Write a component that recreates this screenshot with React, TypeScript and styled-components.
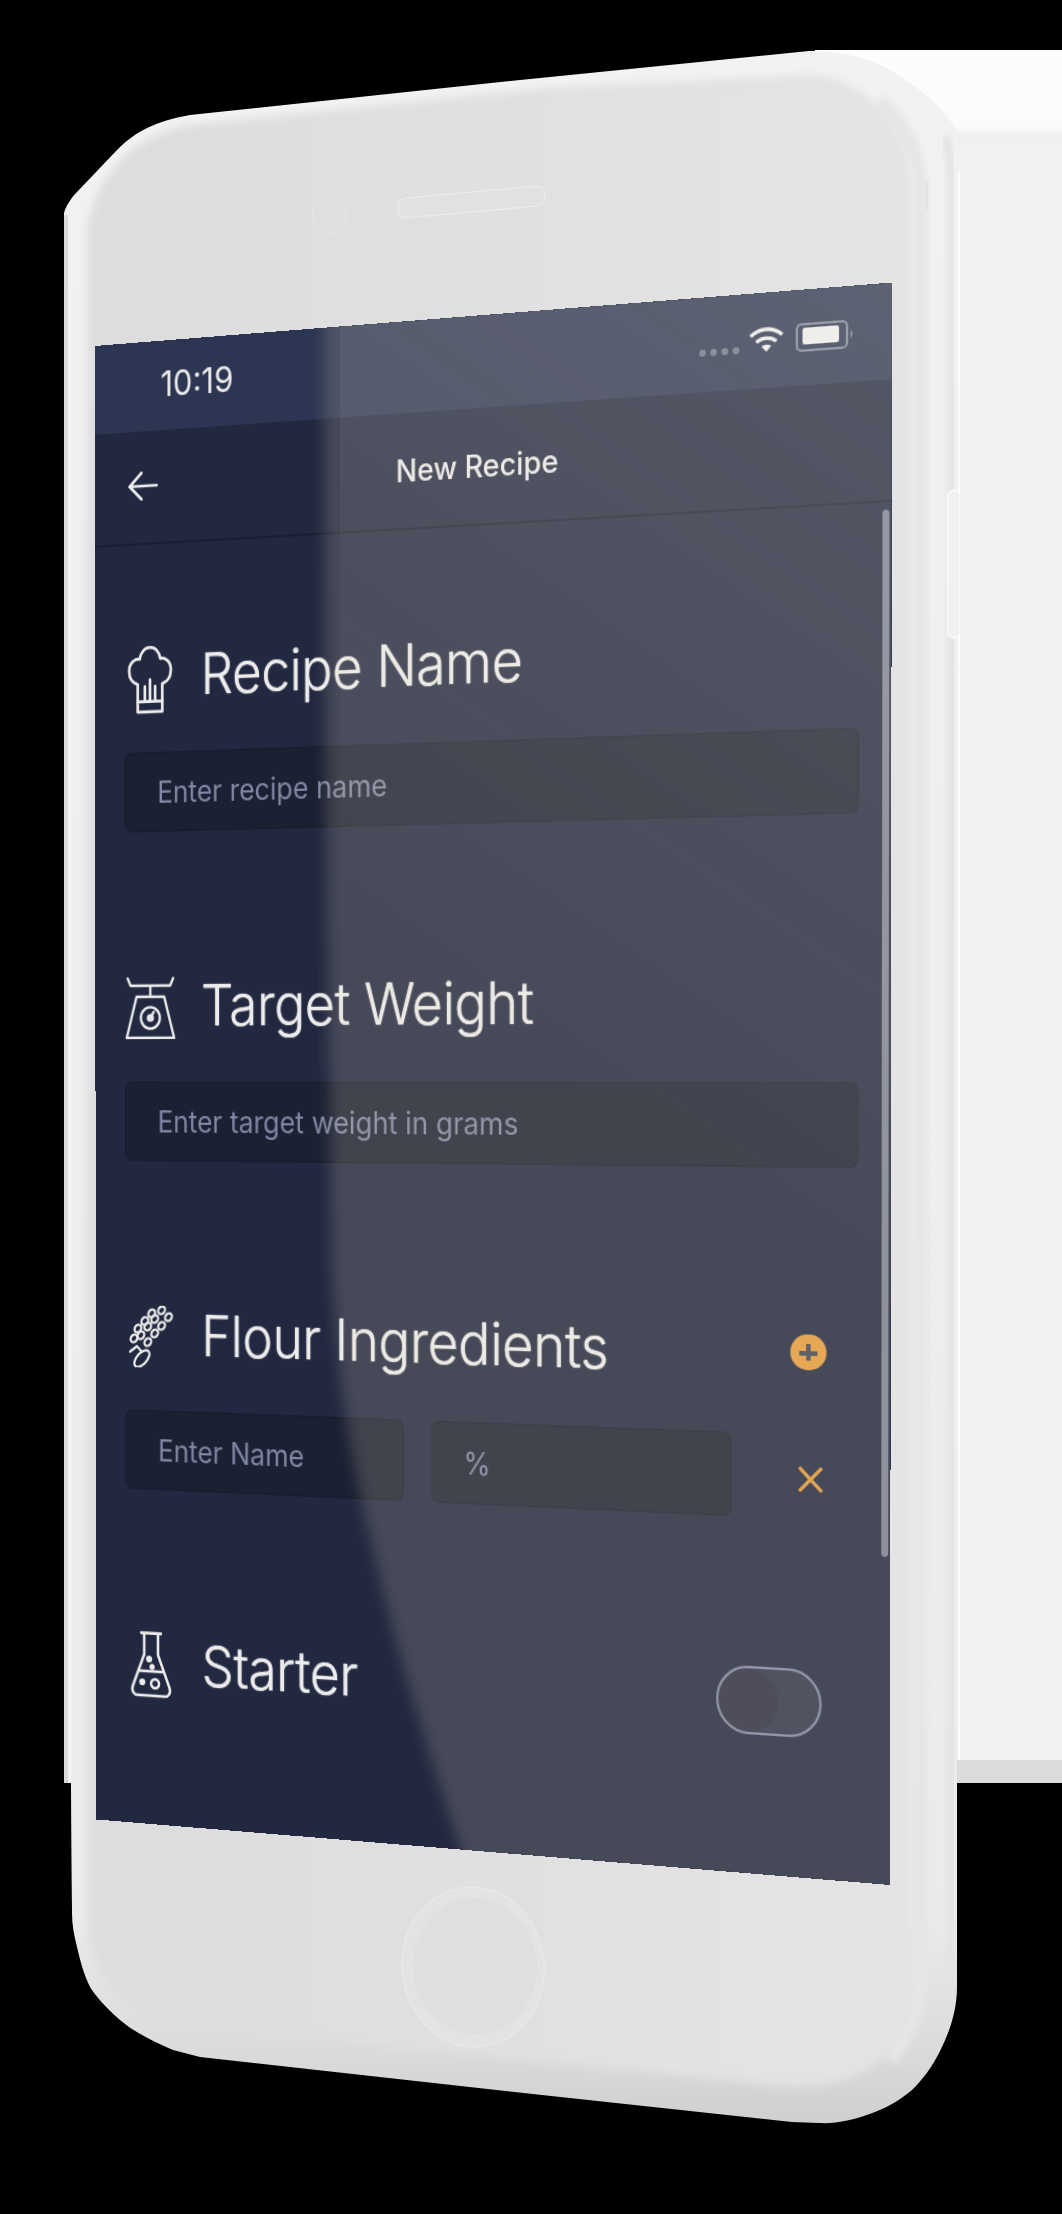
import React from 'react';
import styled, { createGlobalStyle } from 'styled-components';

const SCREEN_W = 375;
const SCREEN_H = 667;

// where the flat screen lands on the picture: TL, TR, BR, BL
type Pt = [number, number];
const corners: Pt[] = [
	[94.5, 346],
	[892, 282.5],
	[890, 1885],
	[96.5, 1819.5],
];

const quadMatrix = (w: number, h: number, [p0, p1, p2, p3]: Pt[]) => {
	const dx1 = p1[0] - p2[0];
	const dx2 = p3[0] - p2[0];
	const sx = p0[0] - p1[0] + p2[0] - p3[0];
	const dy1 = p1[1] - p2[1];
	const dy2 = p3[1] - p2[1];
	const sy = p0[1] - p1[1] + p2[1] - p3[1];
	const den = dx1 * dy2 - dx2 * dy1;
	const g = (sx * dy2 - dx2 * sy) / den;
	const k = (dx1 * sy - sx * dy1) / den;
	const a = p1[0] - p0[0] + g * p1[0];
	const b = p3[0] - p0[0] + k * p3[0];
	const d = p1[1] - p0[1] + g * p1[1];
	const e = p3[1] - p0[1] + k * p3[1];
	return `matrix3d(${a / w},${d / w},0,${g / w},${b / h},${e / h},0,${k / h},0,0,1,0,${p0[0]},${p0[1]},0,1)`;
};

const GlobalStyle = createGlobalStyle`
	html, body {
		margin: 0;
		background: #000;
	}
`;

const Stage = styled.div`
	position: relative;
	width: 1062px;
	height: 2214px;
	overflow: hidden;
	background: #000;
`;

const BackPanel = styled.div`
	position: absolute;
	left: 815px;
	right: 0;
	top: 50px;
	height: 1733px;
	background: linear-gradient(
		to bottom,
		#fdfdfd 0,
		#fbfbfb 76px,
		#eeeeee 86px,
		#f2f2f2 100px,
		#f2f2f2 1710px,
		#dcdcdc 1710px
	);
`;

const DeviceArt = styled.svg`
	position: absolute;
	left: 0;
	top: 0;
`;

const Sheen = styled.svg`
	position: absolute;
	left: 0;
	top: 0;
	pointer-events: none;
`;

const Screen = styled.div`
	position: absolute;
	left: 0;
	top: 0;
	width: ${SCREEN_W}px;
	height: ${SCREEN_H}px;
	transform-origin: 0 0;
	transform: ${quadMatrix(SCREEN_W, SCREEN_H, corners)};
	background: #222840;
	overflow: hidden;
	color: #ececec;
	font-family: Inter, 'Liberation Sans', sans-serif;
`;

const StatusBar = styled.div`
	display: flex;
	align-items: center;
	height: 39.5px;
	padding: 0 17.5px 0 33.5px;
	box-sizing: border-box;
	background: #2c3552;
`;

const Clock = styled.span`
	font-size: 15.5px;
	margin-right: auto;
`;

const SignalDots = styled.div`
	display: flex;
	gap: 1.7px;
	margin: 7px 4.5px 0 0;
`;

const SignalDot = styled.i`
	width: 3px;
	height: 3px;
	border-radius: 50%;
	background: #6f7588;
`;

const Battery = styled.div`
	position: relative;
	display: flex;
	box-sizing: border-box;
	width: 23px;
	height: 12px;
	margin: 0 1.5px 0 5px;
	padding: 1.5px;
	border: 1px solid #7d8498;
	border-radius: 2.5px;

	&::after {
		content: '';
		position: absolute;
		right: -2.8px;
		top: 3px;
		border-left: 1.8px solid #7d8498;
		border-top: 2px solid transparent;
		border-bottom: 2px solid transparent;
	}
`;

const BatteryFill = styled.div`
	width: 16px;
	background: #f0f0f0;
	border-radius: 1px;
`;

const NavBar = styled.div`
	display: grid;
	grid-template-columns: 1fr auto 1fr;
	align-items: center;
	height: 51.5px;
	padding-left: 17px;
	padding-right: 17px;
	box-sizing: border-box;
	border-bottom: 1px solid rgba(0, 0, 0, 0.25);
`;

const BackArrow = styled.svg`
	display: block;
`;

const NavTitle = styled.span`
	font-size: 13.5px;
	font-weight: 500;
`;

const Content = styled.div`
	display: flex;
	flex-direction: column;
	gap: 63px;
	padding: 44px 14px 0 15px;
`;

const Section = styled.section`
	display: flex;
	flex-direction: column;
	gap: 17px;
`;

const HeadingRow = styled.div`
	display: flex;
	align-items: center;
	height: 32px;
	padding-right: 14.4px;
`;

const IconSlot = styled.div`
	display: flex;
	flex: none;
	align-items: center;
	justify-content: center;
	width: 26px;
	margin-right: 12.5px;
`;

const Heading = styled.h2`
	margin: 0 auto 0 0;
	padding-bottom: 2px;
	font-size: 25.4px;
	font-weight: 300;
	line-height: 30px;
	letter-spacing: -0.2px;
	text-shadow: 0 0 0.6px currentColor;
`;

const Field = styled.div<{ $inset?: number }>`
	display: flex;
	align-items: center;
	box-sizing: border-box;
	height: 36px;
	padding-left: ${p => p.$inset ?? 15.6}px;
	background: rgba(0, 0, 0, 0.2);
	border: 1px solid rgba(0, 0, 0, 0.08);
	border-radius: 4px;
	font-size: 13.2px;
	color: #7f87a3;
`;

const IngredientRow = styled.div`
	display: grid;
	grid-template-columns: 137.6px 138.5px 1fr;
	gap: 13.8px;
	align-items: center;
`;

const RemoveCell = styled.div`
	display: flex;
	justify-content: center;
	padding-top: 2px;
`;

const AddButton = styled.div`
	position: relative;
	width: 15.2px;
	height: 15.2px;
	margin-bottom: 3px;
	border-radius: 50%;
	background: #e69b3d;

	&::before,
	&::after {
		content: '';
		position: absolute;
		background: #404555;
	}
	&::before {
		left: 3.8px;
		right: 3.8px;
		top: 6.6px;
		height: 2px;
	}
	&::after {
		top: 3.8px;
		bottom: 3.8px;
		left: 6.6px;
		width: 2px;
	}
`;

const Toggle = styled.div`
	box-sizing: border-box;
	width: 47px;
	height: 29px;
	margin: 0 1.5px 3px 0;
	border: 1px solid #7f89a3;
	border-radius: 14.5px;
	background: rgba(255, 255, 255, 0.06);
	overflow: hidden;
`;

const ToggleThumb = styled.div`
	width: 27px;
	height: 27px;
	border-radius: 50%;
	background: rgba(0, 0, 0, 0.1);
`;

const Scrollbar = styled.div`
	position: absolute;
	left: 370.5px;
	top: 94px;
	width: 3px;
	height: 436px;
	border-radius: 2px;
	background: #7b8095;
`;

const lineProps = {
	fill: 'none',
	stroke: '#ececec',
	strokeWidth: 1.3,
	strokeLinejoin: 'round' as const,
	strokeLinecap: 'round' as const,
};

const ChefHat = () => (
	<svg width="24" height="31" viewBox="0 0 22 30" {...lineProps}>
		<path d="M5 17C2 16 .8 13.500 .8 11 .8 7.500 3.500 5.500 6 6 6.500 3 8.500 1 11 1s4.500 2 5 5c2.500-.5 5.200 1.500 5.200 5 0 2.500-1.200 5-4.200 6v12H5z" />
		<path d="M5 24.500h12M8.500 18v6.500M11 15v9.500M13.500 18v6.500" />
	</svg>
);

const Scale = () => (
	<svg width="27" height="28" viewBox="0 0 26 28" {...lineProps} strokeWidth="1.200">
		<path d="M1.500 .7 3 4h20L24.500 .7M13 4v5M6 9h14l5 18.500H1z" />
		<circle cx="13" cy="18.500" r="4.800" />
		<path d="M13 18.500l1.800-2.800" />
		<circle cx="13" cy="18.500" r="1.200" />
	</svg>
);

const grain: Pt[] = [
	[12, 3.5],
	[8.5, 7],
	[5, 10.5],
	[3, 15],
	[17, 2],
	[13.5, 6],
	[10, 9.5],
	[6.5, 13.5],
	[20.5, 5],
	[17, 9],
	[13.5, 12.5],
	[10, 16.5],
];

const Wheat = () => (
	<svg width="24" height="28" viewBox="0 0 23 28" {...lineProps} strokeWidth="1.100">
		{grain.map(([cx, cy]) => (
			<ellipse
				key={`${cx}-${cy}`}
				cx={cx}
				cy={cy}
				rx="1.900"
				ry="1.500"
				transform={`rotate(-40 ${cx} ${cy})`}
			/>
		))}
		<path d="M1 21 4.500 18.500 7 21" />
		<ellipse cx="7" cy="24" rx="4.800" ry="2.500" transform="rotate(-45 7 24)" />
	</svg>
);

const Flask = () => (
	<svg width="22" height="30" viewBox="0 0 21 30" {...lineProps}>
		<path d="M5.500 .8h10M7 .8v9.700L1.200 25c-.8 2.500.6 4 2.300 4h14c1.700 0 3.100-1.500 2.300-4L14 10.500V.8M4.800 18h11.400" />
		<circle cx="9.500" cy="12.500" r=".9" fill="#ececec" />
		<circle cx="11" cy="16" r=".7" fill="#ececec" />
		<circle cx="6" cy="23" r=".9" fill="#ececec" />
		<circle cx="12.500" cy="23.500" r="2" />
	</svg>
);

const Wifi = () => (
	<svg width="16" height="11" viewBox="0 0 16.500 11" fill="none" stroke="#f0f0f0" strokeWidth="1.600">
		<path d="M1 4C5 .4 11.500 .4 15.500 4M3.600 6.700C6.200 4.600 10.300 4.600 12.900 6.700" />
		<path d="M6 8.600Q8.250 7.300 10.500 8.600L8.250 11z" fill="#f0f0f0" stroke="none" />
	</svg>
);

const PhoneBody = () => (
	<DeviceArt width="1062" height="2214" viewBox="0 0 1062 2214">
		<defs>
			<linearGradient id="bodyFill" gradientUnits="userSpaceOnUse" x1="0" y1="50" x2="0" y2="2124">
				<stop offset="0" stopColor="#f2f2f2" />
				<stop offset="0.9" stopColor="#ebebeb" />
				<stop offset="0.965" stopColor="#dbdbdb" />
				<stop offset="1" stopColor="#cfcfcf" />
			</linearGradient>
			<linearGradient id="frontFill" x1="0" y1="0" x2="1" y2="0">
				<stop offset="0" stopColor="#dddddd" />
				<stop offset="1" stopColor="#e4e4e4" />
			</linearGradient>
			<filter id="soft" x="-5%" y="-5%" width="110%" height="110%">
				<feGaussianBlur stdDeviation="4" />
			</filter>
			<filter id="softer" x="-20%" y="-5%" width="140%" height="110%">
				<feGaussianBlur stdDeviation="3" />
			</filter>
			<clipPath id="bodyClip">
				<path d="M64 213C66 206 71 198 77 192L117 150C135 132 155 121 190 115L520 80 809 51C845 51 875 60 895 73 925 92 945 110 955 128 958 140 960 160 960 177V1760H957V1987C957 2010 950 2030 942 2047 932 2068 922 2080 912 2090 900 2100 890 2106 875 2112 855 2120 835 2124 819 2123L792 2122 542 2095 200 2057 173 2050C155 2042 135 2033 120 2020 105 2007 95 1995 90 1987 84 1975 80 1960 77 1947 74 1935 72 1925 72 1913L71 1783H64Z" />
			</clipPath>
		</defs>
		<g clipPath="url(#bodyClip)">
			<rect width="1062" height="2214" fill="url(#bodyFill)" />
			<path d="M880 100C905 125 921 150 921 200V1980C921 2010 905 2040 890 2060" fill="none" stroke="#e6e6e6" strokeWidth="14" filter="url(#softer)" />
			<path d="M945 135C950 155 952 170 952 190V1990" fill="none" stroke="#e3e3e3" strokeWidth="9" filter="url(#softer)" />
			<path d="M959 170V1760" stroke="#fcfcfc" strokeWidth="2.500" />
			<path d="M66 215V1783" stroke="#d9d9d9" strokeWidth="4" />
			<path d="M70 240V1900" stroke="#f3f3f3" strokeWidth="3" />
			<path
				d="M87 240C88 190 125 135 190 125L542 88 809 75C850 75 885 105 905 143 910 160 912 175 912 200V1990C912 2020 900 2045 885 2055 865 2075 830 2087 792 2087L560 2063 173 2023C145 2018 120 2000 105 1980 95 1965 87 1945 87 1900Z"
				fill="url(#frontFill)"
				filter="url(#soft)"
			/>
			<path d="M927 182V210" stroke="#d9d9d9" strokeWidth="1" />
			<rect x="948" y="490" width="12" height="148" rx="6" fill="#f1f1f1" stroke="#fbfbfb" strokeWidth="1.500" />
		</g>
		<ellipse cx="329" cy="215" rx="17" ry="19" fill="none" stroke="#e6e6e6" strokeWidth="1" />
		<path
			d="M405 198 538 186Q545 186 545 195 545 205 538 206L405 218Q398 218 398 208 398 199 405 198Z"
			fill="#e1e1e1"
			stroke="#ececec"
			strokeWidth="1.200"
		/>
		<ellipse cx="473" cy="1967" rx="71" ry="80" transform="rotate(-7 473 1967)" fill="#e3e3e3" stroke="#eaeaea" strokeWidth="1" />
		<ellipse cx="475" cy="1966" rx="62" ry="68" transform="rotate(-7 475 1966)" fill="#dfdfdf" />
	</DeviceArt>
);

const GlassSheen = () => (
	<Sheen width="1062" height="2214" viewBox="0 0 1062 2214">
		<defs>
			<clipPath id="screenClip">
				<polygon points={corners.map(p => p.join(',')).join(' ')} />
			</clipPath>
			<filter id="sheenBlur" x="-5%" y="-5%" width="110%" height="110%">
				<feGaussianBlur stdDeviation="7" />
			</filter>
			<linearGradient id="topLight" gradientUnits="userSpaceOnUse" x1="892" y1="290" x2="400" y2="1000">
				<stop offset="0" stopColor="#ffffff" stopOpacity="0.08" />
				<stop offset="1" stopColor="#ffffff" stopOpacity="0" />
			</linearGradient>
		</defs>
		<g clipPath="url(#screenClip)">
			<path
				d="M324 240C324 600 326 900 332 1270 338 1400 356 1480 378 1570 394 1640 430 1760 484 1920H960V240Z"
				fill="rgb(236,226,200)"
				fillOpacity="0.18"
				filter="url(#sheenBlur)"
			/>
			<rect x="340" y="240" width="560" height="1000" fill="url(#topLight)" />
		</g>
	</Sheen>
);

export default function App() {
	return (
		<Stage>
			<GlobalStyle />
			<BackPanel />
			<PhoneBody />
			<Screen>
				<StatusBar>
					<Clock>10:19</Clock>
					<SignalDots>
						{[0, 1, 2, 3].map(i => (
							<SignalDot key={i} />
						))}
					</SignalDots>
					<Wifi />
					<Battery>
						<BatteryFill />
					</Battery>
				</StatusBar>
				<NavBar>
					<BackArrow width="15" height="13" viewBox="0 0 15 13" {...lineProps}>
						<path d="M.8 6.500H14.500M6.800 .6.800 6.500l6 5.900" />
					</BackArrow>
					<NavTitle>New Recipe</NavTitle>
				</NavBar>
				<Content>
					<Section>
						<HeadingRow>
							<IconSlot>
								<ChefHat />
							</IconSlot>
							<Heading>Recipe Name</Heading>
						</HeadingRow>
						<Field>Enter recipe name</Field>
					</Section>
					<Section>
						<HeadingRow>
							<IconSlot>
								<Scale />
							</IconSlot>
							<Heading>Target Weight</Heading>
						</HeadingRow>
						<Field>Enter target weight in grams</Field>
					</Section>
					<Section>
						<HeadingRow>
							<IconSlot>
								<Wheat />
							</IconSlot>
							<Heading>Flour Ingredients</Heading>
							<AddButton />
						</HeadingRow>
						<IngredientRow>
							<Field>Enter Name</Field>
							<Field $inset={13.8}>%</Field>
							<RemoveCell>
								<svg width="14" height="14" viewBox="0 0 14 14" fill="none" stroke="#e69b3d" strokeWidth="1.500">
									<path d="M2 2l10 10M12 2 2 12" />
								</svg>
							</RemoveCell>
						</IngredientRow>
					</Section>
					<Section>
						<HeadingRow>
							<IconSlot>
								<Flask />
							</IconSlot>
							<Heading>Starter</Heading>
							<Toggle>
								<ToggleThumb />
							</Toggle>
						</HeadingRow>
					</Section>
				</Content>
				<Scrollbar />
			</Screen>
			<GlassSheen />
		</Stage>
	);
}
